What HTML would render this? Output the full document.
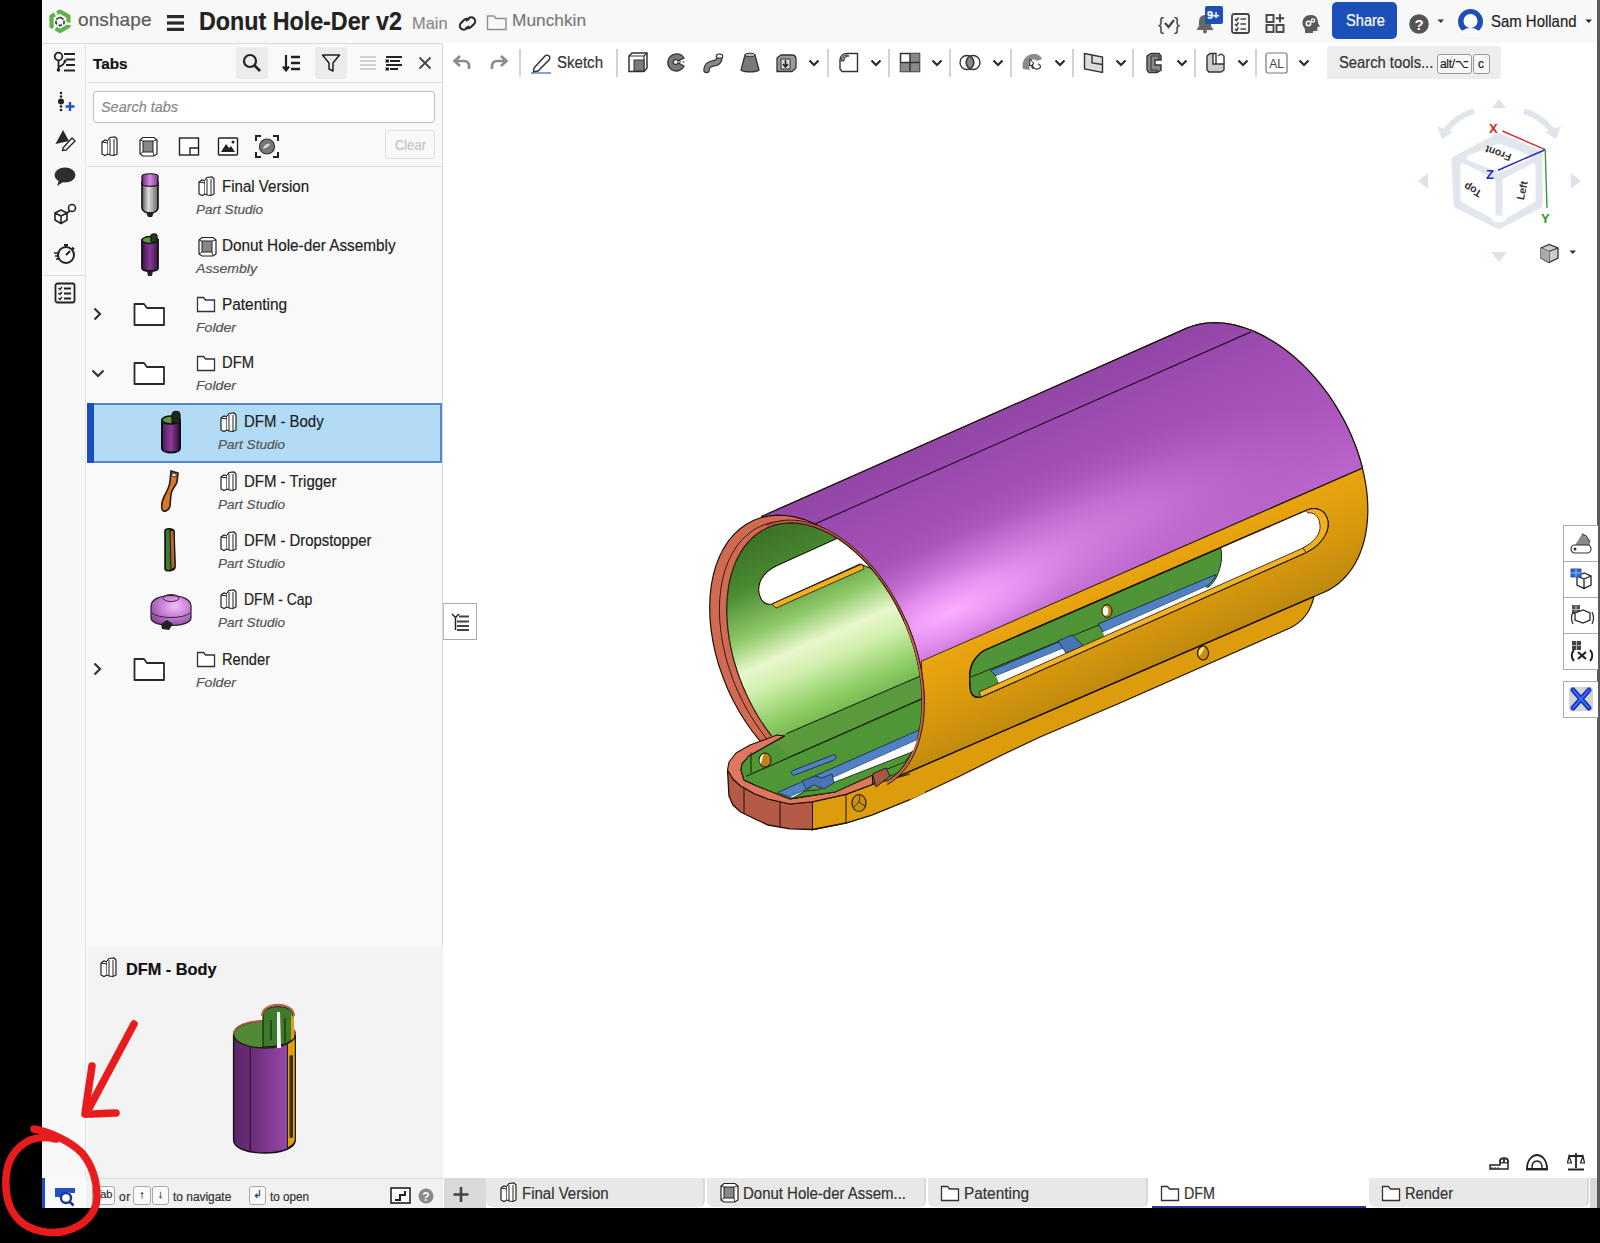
<!DOCTYPE html><html><head><meta charset="utf-8"><style>
*{margin:0;padding:0;box-sizing:border-box}
html,body{width:1600px;height:1243px;overflow:hidden;background:#000;font-family:"Liberation Sans",sans-serif;color:#222}
.a{position:absolute}
.t{position:absolute;white-space:nowrap;line-height:1;-webkit-text-stroke:0.2px currentColor}
svg{position:absolute;overflow:visible}
</style></head><body>
<div class="a" style="left:42px;top:0px;width:1555px;height:1208px;background:#fff;"></div>
<div class="a" style="left:1597px;top:0px;width:3px;height:1208px;background:#5a5a5a;"></div>
<div class="a" style="left:42px;top:0px;width:1555px;height:43px;background:#f8f8f8;"></div>
<div class="a" style="left:42px;top:43px;width:401px;height:1px;background:#dcdcdc;"></div>
<svg style="left:48px;top:9px" width="24" height="25" viewBox="0 0 24 25"><path d="M12,2.5 L20.5,7.3 L20.5,17.2 L12,22 L3.5,17.2 L3.5,7.3 Z" fill="none" stroke="#5cb346" stroke-width="4.2" stroke-linejoin="round" stroke-dasharray="16 2.5"/><path d="M12,8.2 L16,10.5 L16,14.5 L12,16.8 L8,14.5 L8,10.5 Z" fill="none" stroke="#3a3a3a" stroke-width="1.6" stroke-dasharray="4 1.5"/></svg>
<div class="t" style="left:78.0px;top:10.4px;font-size:19px;color:#5a5a5a;letter-spacing:0.1px;font-weight:normal;font-style:normal;">onshape</div>
<svg style="left:166px;top:14px" width="19" height="18" viewBox="0 0 19 18"><rect x="1" y="1" width="17" height="3.2" fill="#2a2a2a"/><rect x="1" y="7.4" width="17" height="3.2" fill="#2a2a2a"/><rect x="1" y="13.8" width="17" height="3.2" fill="#2a2a2a"/></svg>
<div class="t" style="left:198.5px;top:8.0px;font-size:26px;color:#222;letter-spacing:0px;font-weight:bold;font-style:normal;transform:scaleX(0.8951);transform-origin:0 0;">Donut Hole-Der v2</div>
<div class="t" style="left:411.5px;top:14.6px;font-size:17px;color:#8a8a8a;letter-spacing:0px;font-weight:normal;font-style:normal;transform:scaleX(0.9635);transform-origin:0 0;">Main</div>
<svg style="left:459px;top:15px" width="17" height="17" viewBox="0 0 17 17"><g fill="none" stroke="#2a2a2a" stroke-width="2.1" stroke-linecap="round"><path d="M7.5,5.5 L9.5,3.5 C11,2 13.5,2 15,3.5 C16.5,5 16.5,7.5 15,9 L12,12 C10.5,13.5 8.5,13.5 7.5,12.5"/><path d="M9.5,11.5 L7.5,13.5 C6,15 3.5,15 2,13.5 C0.5,12 0.5,9.5 2,8 L5,5 C6.5,3.5 8.5,3.5 9.5,4.5"/></g></svg>
<svg style="left:486px;top:14px" width="22" height="17" viewBox="0 0 22 17"><path d="M1.5,2 L8,2 L10,4.5 L20,4.5 L20,15.5 L1.5,15.5 Z" fill="none" stroke="#8f8f8f" stroke-width="1.4"/></svg>
<div class="t" style="left:512.0px;top:12.4px;font-size:17px;color:#7a7a7a;letter-spacing:0px;font-weight:normal;font-style:normal;transform:scaleX(1.0172);transform-origin:0 0;">Munchkin</div>
<svg style="left:1158px;top:14px" width="24" height="19" viewBox="0 0 24 19"><text x="0" y="16" font-family="Liberation Sans" font-size="18" fill="#444">{</text><text x="16" y="16" font-family="Liberation Sans" font-size="18" fill="#444">}</text><path d="M7,9 L10.5,13 L16,6" fill="none" stroke="#444" stroke-width="2.2"/></svg>
<svg style="left:1195px;top:13px" width="20" height="20" viewBox="0 0 20 20"><path d="M10,2 C5,2 4,6 4,10 L4,13 L1.5,17 L18.5,17 L16,13 L16,10 C16,6 15,2 10,2 Z" fill="#666"/><circle cx="10" cy="18.5" r="2" fill="#666"/></svg>
<div class="a" style="left:1205px;top:6px;width:18px;height:18px;background:#1d50b6;border-radius:2px"></div>
<div class="t" style="left:1207.0px;top:10.2px;font-size:11px;color:#fff;letter-spacing:-0.3px;font-weight:bold;font-style:normal;">9+</div>
<svg style="left:1231px;top:13px" width="19" height="21" viewBox="0 0 19 21"><rect x="1" y="1" width="17" height="19" rx="2" fill="none" stroke="#444" stroke-width="1.8"/><g stroke="#444" stroke-width="1.6"><path d="M4,6 L5.5,7.5 L7.5,4.5 M4,11 L5.5,12.5 L7.5,9.5 M4,16 L5.5,17.5 L7.5,14.5" fill="none"/><path d="M9.5,6 L15,6 M9.5,11 L15,11 M9.5,16 L15,16"/></g></svg>
<svg style="left:1265px;top:13px" width="22" height="21" viewBox="0 0 22 21"><g fill="none" stroke="#444" stroke-width="1.9"><rect x="1.5" y="2" width="7" height="7"/><rect x="1.5" y="12" width="7" height="7"/><rect x="11.5" y="12" width="7" height="7"/><path d="M15,1 L15,9.5 M10.8,5.2 L19.2,5.2"/></g></svg>
<svg style="left:1301px;top:14px" width="21" height="20" viewBox="0 0 21 20"><path d="M10,1 C4.5,1 1.5,4.5 1.5,9 C1.5,12 3,13.5 4,15 L4,19 L12,19 L12,17 L15,17 C16,17 16.5,16 16.5,15 L16.5,13 L19,12.5 L17,9 C17,4.5 15,1 10,1 Z" fill="#5a5a5a"/><circle cx="7.5" cy="9.5" r="2.2" fill="none" stroke="#fff" stroke-width="1.5"/><circle cx="12" cy="6.5" r="1.6" fill="none" stroke="#fff" stroke-width="1.3"/></svg>
<div class="a" style="left:1332px;top:2px;width:65px;height:37px;background:#1c4fb8;border-radius:5px"></div>
<div class="t" style="left:1345.5px;top:11.6px;font-size:17px;color:#fff;letter-spacing:0px;font-weight:normal;font-style:normal;transform:scaleX(0.8598);transform-origin:0 0;">Share</div>
<svg style="left:1409px;top:14px" width="21" height="20" viewBox="0 0 21 20"><circle cx="10" cy="10" r="9.8" fill="#555"/><text x="10" y="16" font-family="Liberation Sans" font-weight="bold" font-size="15" fill="#fff" text-anchor="middle">?</text></svg>
<svg style="left:1437px;top:19px" width="8" height="5" viewBox="0 0 8 5"><path d="M0.5,0.5 L7,0.5 L3.75,4 Z" fill="#333"/></svg>
<svg style="left:1457px;top:9px" width="27" height="25" viewBox="0 0 27 25"><defs><clipPath id="avc"><rect x="0" y="0" width="27" height="24"/></clipPath></defs><g clip-path="url(#avc)"><circle cx="13.5" cy="12.5" r="12.5" fill="#1d50b6"/><circle cx="13.5" cy="12" r="7" fill="#fff"/><ellipse cx="13.5" cy="27" rx="10.5" ry="8" fill="#fff"/></g></svg>
<div class="t" style="left:1490.5px;top:12.6px;font-size:17px;color:#222;letter-spacing:0px;font-weight:normal;font-style:normal;transform:scaleX(0.8785);transform-origin:0 0;">Sam Holland</div>
<svg style="left:1585px;top:19px" width="8" height="5" viewBox="0 0 8 5"><path d="M0.5,0.5 L7,0.5 L3.75,4 Z" fill="#222"/></svg>
<svg style="left:453px;top:54px" width="18" height="17" viewBox="0 0 18 17"><path d="M7,2 L1.5,7 L7,12 M2,7 L11,7 C14.5,7 16,9.5 16,12.5 L16,15" fill="none" stroke="#8a8a8a" stroke-width="2.6"/></svg>
<svg style="left:490px;top:54px" width="18" height="17" viewBox="0 0 18 17"><path d="M11,2 L16.5,7 L11,12 M16,7 L7,7 C3.5,7 2,9.5 2,12.5 L2,15" fill="none" stroke="#8a8a8a" stroke-width="2.6"/></svg>
<div class="a" style="left:519px;top:49px;width:2px;height:28px;background:#d4d4d4;"></div>
<svg style="left:530px;top:52px" width="22" height="22" viewBox="0 0 22 22"><path d="M4,16 L15,4 C16,3 18,3 19,4 C20,5 20,7 19,8 L8,19 L3.5,20 Z" fill="none" stroke="#333" stroke-width="1.5"/><path d="M1,21 L21,21" stroke="#4a6fc8" stroke-width="1.3"/></svg>
<div class="t" style="left:557.0px;top:54.5px;font-size:16px;color:#333;letter-spacing:0px;font-weight:normal;font-style:normal;transform:scaleX(0.9405);transform-origin:0 0;">Sketch</div>
<div class="a" style="left:616px;top:49px;width:2px;height:28px;background:#d4d4d4;"></div>
<svg style="left:627px;top:52px" width="22" height="21" viewBox="0 0 22 21"><path d="M2,4 L5,1 L20,1 L20,16 L17,19.5 L2,19.5 Z" fill="#fff" stroke="#333" stroke-width="1.5"/><path d="M2,4 L17,4 L20,1 M17,4 L17,19.5" fill="none" stroke="#333" stroke-width="1.2"/><rect x="7" y="8" width="10" height="11" fill="#7a7a7a" stroke="#333" stroke-width="1"/></svg>
<svg style="left:665px;top:52px" width="22" height="21" viewBox="0 0 22 21"><path d="M11,2 A8.5,8.5 0 1 0 19,14 L13,11 A2.5,2.5 0 1 1 13,9 L19,6 A8.5,8.5 0 0 0 11,2 Z" fill="#7a7a7a" stroke="#333" stroke-width="1.3"/><path d="M14,10 L21,10" stroke="#333" stroke-width="1" stroke-dasharray="2 1.5"/></svg>
<svg style="left:702px;top:52px" width="23" height="22" viewBox="0 0 23 22"><path d="M4.5,18 C4.5,13 8,12 11,11.5 C15,11 17.5,9 17.5,5" fill="none" stroke="#333" stroke-width="6.6" stroke-linecap="round"/><path d="M4.5,18 C4.5,13 8,12 11,11.5 C15,11 17.5,9 17.5,5" fill="none" stroke="#8a8a8a" stroke-width="4.2" stroke-linecap="round"/><ellipse cx="17.5" cy="4.2" rx="3.3" ry="2.2" fill="#eee" stroke="#333" stroke-width="1.1"/></svg>
<svg style="left:739px;top:52px" width="22" height="21" viewBox="0 0 22 21"><path d="M6,3 L16,3 L20,18 C17,20.5 5,20.5 2,18 Z" fill="#7a7a7a" stroke="#333" stroke-width="1.3"/><ellipse cx="11" cy="3" rx="5" ry="1.8" fill="#bbb" stroke="#333" stroke-width="1"/></svg>
<svg style="left:775px;top:52px" width="23" height="21" viewBox="0 0 23 21"><path d="M2,6 L6,3 L17,3 C20,3 21,5 21,7 L21,16 L17,19.5 L2,19.5 Z" fill="#9a9a9a" stroke="#333" stroke-width="1.3"/><rect x="6" y="7" width="9" height="10" fill="#ddd" stroke="#333" stroke-width="1"/><path d="M10.5,8 L10.5,14 M8,12 L10.5,15 L13,12" fill="none" stroke="#222" stroke-width="1.6"/></svg>
<svg style="left:808px;top:59px" width="12" height="8" viewBox="0 0 12 8"><path d="M1.5,1.5 L6,6 L10.5,1.5" fill="none" stroke="#2a2a2a" stroke-width="2.2"/></svg>
<div class="a" style="left:827px;top:49px;width:2px;height:28px;background:#d4d4d4;"></div>
<svg style="left:838px;top:52px" width="22" height="21" viewBox="0 0 22 21"><path d="M2,8 C2,4 5,1.5 9,1.5 L19.5,1.5 L19.5,19.5 L4,19.5 L2,17 Z" fill="#fff" stroke="#333" stroke-width="1.4"/><path d="M3,9 C3,5 6,3 9,3 L11,4 C8,4.5 6,6 6,9 Z" fill="#8a8a8a" stroke="#333" stroke-width="0.9"/></svg>
<svg style="left:870px;top:59px" width="12" height="8" viewBox="0 0 12 8"><path d="M1.5,1.5 L6,6 L10.5,1.5" fill="none" stroke="#2a2a2a" stroke-width="2.2"/></svg>
<div class="a" style="left:888px;top:49px;width:2px;height:28px;background:#d4d4d4;"></div>
<svg style="left:899px;top:52px" width="22" height="21" viewBox="0 0 22 21"><rect x="1.5" y="1.5" width="19" height="18" fill="#fff" stroke="#333" stroke-width="1.5"/><rect x="11" y="1.5" width="9.5" height="9" fill="#8a8a8a"/><rect x="1.5" y="10.5" width="9.5" height="9" fill="#8a8a8a"/><rect x="11" y="10.5" width="9.5" height="9" fill="#8a8a8a"/><path d="M11,1.5 L11,19.5 M1.5,10.5 L20.5,10.5" stroke="#333" stroke-width="1.5"/></svg>
<svg style="left:931px;top:59px" width="12" height="8" viewBox="0 0 12 8"><path d="M1.5,1.5 L6,6 L10.5,1.5" fill="none" stroke="#2a2a2a" stroke-width="2.2"/></svg>
<div class="a" style="left:948.5px;top:49px;width:2px;height:28px;background:#d4d4d4;"></div>
<svg style="left:959px;top:52px" width="23" height="21" viewBox="0 0 23 21"><circle cx="8" cy="10.5" r="7" fill="#fff" stroke="#333" stroke-width="1.4"/><circle cx="14" cy="10.5" r="7" fill="none" stroke="#333" stroke-width="1.4"/><path d="M11,4.5 A7,7 0 0 1 11,16.5 A7,7 0 0 1 11,4.5 Z" fill="#8a8a8a" stroke="#333" stroke-width="1"/></svg>
<svg style="left:992px;top:59px" width="12" height="8" viewBox="0 0 12 8"><path d="M1.5,1.5 L6,6 L10.5,1.5" fill="none" stroke="#2a2a2a" stroke-width="2.2"/></svg>
<div class="a" style="left:1010px;top:49px;width:2px;height:28px;background:#d4d4d4;"></div>
<svg style="left:1020px;top:51px" width="24" height="23" viewBox="0 0 24 23"><path d="M3,18 C1,10 6,3 14,3 C18,3 21,5 22,8 L17,10 C15,8 12,8 10,10 C8,12 9,16 10,19 Z" fill="#8a8a8a"/><path d="M10,8 L14,13 L12,13.5 L14,17 L12.5,17.5 L11,14 L9.5,15 Z" fill="#fff" stroke="#222" stroke-width="1"/><path d="M12,15 C14,18 17,19 20,17 C21,15 20,13 18,13" fill="none" stroke="#333" stroke-width="1.2"/></svg>
<svg style="left:1054px;top:59px" width="12" height="8" viewBox="0 0 12 8"><path d="M1.5,1.5 L6,6 L10.5,1.5" fill="none" stroke="#2a2a2a" stroke-width="2.2"/></svg>
<div class="a" style="left:1071.5px;top:49px;width:2px;height:28px;background:#d4d4d4;"></div>
<svg style="left:1083px;top:52px" width="21" height="22" viewBox="0 0 21 22"><path d="M1.5,1.5 L19.5,5 L19.5,20.5 L1.5,17 Z" fill="#ddd" stroke="#333" stroke-width="1.4"/><path d="M9,3 L9,11 L19.5,12.5" fill="none" stroke="#333" stroke-width="1.4"/></svg>
<svg style="left:1115px;top:59px" width="12" height="8" viewBox="0 0 12 8"><path d="M1.5,1.5 L6,6 L10.5,1.5" fill="none" stroke="#2a2a2a" stroke-width="2.2"/></svg>
<div class="a" style="left:1132px;top:49px;width:2px;height:28px;background:#d4d4d4;"></div>
<svg style="left:1145px;top:52px" width="18" height="22" viewBox="0 0 18 22"><path d="M2,4 L6,1.5 L14,1.5 L16,4 L16,8 L10,8 L10,13 L16,13 L16,18 L12,20.5 L4,20.5 L2,18 Z" fill="#8a8a8a" stroke="#333" stroke-width="1.4"/><path d="M6,4 L14,4 L14,8 M6,4 L6,18 L12,18 L12,20" fill="none" stroke="#333" stroke-width="1.1"/></svg>
<svg style="left:1176px;top:59px" width="12" height="8" viewBox="0 0 12 8"><path d="M1.5,1.5 L6,6 L10.5,1.5" fill="none" stroke="#2a2a2a" stroke-width="2.2"/></svg>
<div class="a" style="left:1193.5px;top:49px;width:2px;height:28px;background:#d4d4d4;"></div>
<svg style="left:1205px;top:52px" width="21" height="21" viewBox="0 0 21 21"><path d="M2,4 L5,1.5 L8,1.5 L8,12 L19,12 L19,18 L16,20 L4,20 L2,18 Z" fill="#ccc" stroke="#333" stroke-width="1.4"/><path d="M8,1.5 L11,1.5 L11,12 M13,4 L16,2 L19,4 L19,12" fill="none" stroke="#333" stroke-width="1.4"/></svg>
<svg style="left:1237px;top:59px" width="12" height="8" viewBox="0 0 12 8"><path d="M1.5,1.5 L6,6 L10.5,1.5" fill="none" stroke="#2a2a2a" stroke-width="2.2"/></svg>
<div class="a" style="left:1255px;top:49px;width:2px;height:28px;background:#d4d4d4;"></div>
<svg style="left:1265px;top:52px" width="23" height="22" viewBox="0 0 23 22"><rect x="1" y="1" width="21" height="20" rx="2" fill="#fff" stroke="#777" stroke-width="1.2"/><text x="11.5" y="15.5" font-family="Liberation Sans" font-size="12" fill="#444" text-anchor="middle">AL</text></svg>
<svg style="left:1298px;top:59px" width="12" height="8" viewBox="0 0 12 8"><path d="M1.5,1.5 L6,6 L10.5,1.5" fill="none" stroke="#2a2a2a" stroke-width="2.2"/></svg>
<div class="a" style="left:1327px;top:46px;width:174px;height:33px;background:#ededed;border-radius:3px"></div>
<div class="t" style="left:1339.0px;top:55.0px;font-size:16px;color:#333;letter-spacing:0px;font-weight:normal;font-style:normal;transform:scaleX(0.9221);transform-origin:0 0;">Search tools...</div>
<div class="a" style="left:1437px;top:54px;width:35px;height:20px;background:#f7f7f7;border:1px solid #999;border-radius:3px"></div>
<div class="t" style="left:1440.0px;top:57.8px;font-size:12px;color:#222;letter-spacing:-0.3px;font-weight:normal;font-style:normal;">alt/⌥</div>
<div class="a" style="left:1473px;top:54px;width:17px;height:20px;background:#f7f7f7;border:1px solid #999;border-radius:3px"></div>
<div class="t" style="left:1478.0px;top:57.8px;font-size:12px;color:#222;letter-spacing:0px;font-weight:normal;font-style:normal;">c</div>
<div class="a" style="left:42px;top:44px;width:44px;height:1134px;background:#f8f8f8;border-right:1px solid #e2e2e2"></div>
<div class="a" style="left:44px;top:275px;width:42px;height:1px;background:#dedede;"></div>
<svg style="left:53px;top:51px" width="24" height="24" viewBox="0 0 24 24"><circle cx="5.5" cy="5.5" r="3.8" fill="none" stroke="#222" stroke-width="1.8"/><path d="M5.5,9.3 L5.5,19 M5.5,16 C9,15 11,13 12,10" fill="none" stroke="#222" stroke-width="1.8"/><circle cx="5.5" cy="19" r="1.8" fill="#222"/><circle cx="12" cy="10" r="1.5" fill="#222"/><path d="M11,3 L22,3 M13,8.5 L22,8.5 M13,14 L22,14 M11,19.5 L22,19.5" stroke="#222" stroke-width="1.8"/></svg>
<svg style="left:55px;top:91px" width="22" height="22" viewBox="0 0 22 22"><g fill="#222"><circle cx="6" cy="2" r="1.3"/><circle cx="6" cy="5.5" r="1.3"/><circle cx="6" cy="10.5" r="3"/><circle cx="6" cy="15.5" r="1.3"/><circle cx="6" cy="19" r="1.3"/></g><path d="M15,11 L15,20 M10.5,15.5 L19.5,15.5" stroke="#1f4fc8" stroke-width="2.4"/></svg>
<svg style="left:54px;top:128px" width="23" height="23" viewBox="0 0 23 23"><path d="M1.5,16 L9,2 L15,13 Z" fill="#2a2a2a"/><path d="M9,20 L18,10 L21,13 L12,22 L8.5,22.5 Z" fill="#fff" stroke="#2a2a2a" stroke-width="1.4"/></svg>
<svg style="left:53px;top:166px" width="24" height="22" viewBox="0 0 24 22"><ellipse cx="12" cy="9" rx="10.5" ry="7.5" fill="#2e2e2e"/><path d="M6,14 L4,20 L11,15.5 Z" fill="#2e2e2e"/></svg>
<svg style="left:53px;top:203px" width="24" height="24" viewBox="0 0 24 24"><path d="M2,10 L8,7 L14,10 L14,17 L8,20.5 L2,17 Z M2,10 L8,13 L14,10 M8,13 L8,20.5" fill="#fff" stroke="#222" stroke-width="1.6" stroke-linejoin="round"/><path d="M14,10 L18,7" stroke="#222" stroke-width="1.6"/><circle cx="19" cy="5" r="3.5" fill="#fff" stroke="#222" stroke-width="1.6"/></svg>
<svg style="left:53px;top:242px" width="24" height="24" viewBox="0 0 24 24"><circle cx="13" cy="13" r="8" fill="none" stroke="#222" stroke-width="2"/><path d="M11,3 L15,3 M13,3 L13,5 M19,5.5 L21,7.5 M13,13 L17,9" stroke="#222" stroke-width="2"/><path d="M1,11 L5,11 M2,14 L5,14 M3,17 L6,17" stroke="#222" stroke-width="1.3"/></svg>
<svg style="left:54px;top:282px" width="22" height="22" viewBox="0 0 22 22"><rect x="1.5" y="1.5" width="19" height="19" rx="2" fill="none" stroke="#222" stroke-width="1.8"/><path d="M4.5,6 L6,7.5 L8,5 M4.5,11 L6,12.5 L8,10 M4.5,16 L6,17.5 L8,15" fill="none" stroke="#222" stroke-width="1.4"/><path d="M10,6.5 L17,6.5 M10,11.5 L17,11.5 M10,16.5 L17,16.5" stroke="#222" stroke-width="1.8"/></svg>
<div class="a" style="left:87px;top:44px;width:356px;height:1134px;background:#f9f9f9;border-right:1px solid #d9d9d9"></div>
<div class="t" style="left:93.0px;top:55.9px;font-size:15px;color:#111;letter-spacing:0px;font-weight:bold;font-style:normal;transform:scaleX(1.0209);transform-origin:0 0;">Tabs</div>
<div class="a" style="left:236px;top:47px;width:32px;height:32px;background:#ebebeb;border-radius:3px"></div>
<svg style="left:242px;top:53px" width="20" height="20" viewBox="0 0 20 20"><circle cx="8" cy="8" r="6" fill="none" stroke="#222" stroke-width="2.2"/><path d="M12.5,12.5 L18,18" stroke="#222" stroke-width="2.6"/></svg>
<svg style="left:282px;top:54px" width="19" height="18" viewBox="0 0 19 18"><path d="M4,1 L4,16 M1,12.5 L4,16.5 L7,12.5" fill="none" stroke="#222" stroke-width="2.2"/><path d="M9,3 L18,3 M9,9 L18,9 M9,15 L18,15" stroke="#222" stroke-width="2.4"/></svg>
<div class="a" style="left:315px;top:47px;width:32px;height:32px;background:#ebebeb;border-radius:3px"></div>
<svg style="left:321px;top:53px" width="20" height="20" viewBox="0 0 20 20"><path d="M1.5,2 L18.5,2 L12,10 L12,18 L8,16 L8,10 Z" fill="none" stroke="#222" stroke-width="1.5" stroke-linejoin="round"/></svg>
<svg style="left:359px;top:55px" width="18" height="16" viewBox="0 0 18 16"><path d="M1,2 L17,2 M1,6 L17,6 M1,10 L17,10 M1,14 L17,14" stroke="#d0d0d0" stroke-width="2"/></svg>
<svg style="left:385px;top:55px" width="18" height="16" viewBox="0 0 18 16"><path d="M1,2 L17,2 M5,6 L15,6 M1,10 L17,10 M5,14 L13,14" stroke="#222" stroke-width="2"/><rect x="0.5" y="4.5" width="3.5" height="3" fill="#222"/><rect x="0.5" y="12.5" width="3.5" height="3" fill="#222"/></svg>
<svg style="left:418px;top:56px" width="14" height="14" viewBox="0 0 14 14"><path d="M1.5,1.5 L12.5,12.5 M12.5,1.5 L1.5,12.5" stroke="#444" stroke-width="1.8"/></svg>
<div class="a" style="left:87px;top:82px;width:356px;height:1px;background:#dedede;"></div>
<div class="a" style="left:93px;top:91px;width:342px;height:32px;background:#fff;border:1px solid #bdbdbd;border-radius:3px"></div>
<div class="t" style="left:101.0px;top:99.3px;font-size:15px;color:#888;letter-spacing:0px;font-weight:normal;font-style:italic;transform:scaleX(0.9620);transform-origin:0 0;">Search tabs</div>
<svg style="left:100px;top:136px" width="20" height="21" viewBox="0 0 20 21"><path d="M2,6 L5,4 L8,5 L8,18 L5,19.5 L2,18 Z" fill="#fff" stroke="#222" stroke-width="1.2"/><path d="M8,4 L10,1.5 L15,1 L17,3 L17,18 L14,19.5 L10,19 L8,18" fill="#fff" stroke="#222" stroke-width="1.2"/><path d="M10,3 L10,19 M14,3 L14,19.5 M2,6 L8,7" fill="none" stroke="#222" stroke-width="1"/></svg>
<svg style="left:138px;top:136px" width="21" height="21" viewBox="0 0 21 21"><path d="M2,4 L5,1.5 L16,1.5 L19,4 L19,18 L16,20 L5,20 L2,18 Z" fill="#fff" stroke="#222" stroke-width="1.2"/><path d="M5,5 L15,5 L15,16 L5,16 Z" fill="#888" stroke="#222" stroke-width="1"/><path d="M2,4 L5,5 M15,5 L19,4 M5,16 L2,18 M15,16 L16,20" stroke="#222" stroke-width="0.9"/></svg>
<svg style="left:178px;top:136px" width="22" height="21" viewBox="0 0 22 21"><rect x="1.5" y="2" width="19" height="17" fill="#fff" stroke="#222" stroke-width="1.4"/><path d="M12,19 L12,12 L20.5,12" fill="none" stroke="#222" stroke-width="1.4"/></svg>
<svg style="left:217px;top:136px" width="22" height="21" viewBox="0 0 22 21"><rect x="1.5" y="2" width="19" height="17" rx="1" fill="#fff" stroke="#222" stroke-width="1.4"/><path d="M4,16 L9,8 L12,12 L14,10 L18,16 Z" fill="#222"/><circle cx="16" cy="6" r="1.5" fill="#222"/></svg>
<svg style="left:255px;top:135px" width="24" height="23" viewBox="0 0 24 23"><path d="M1,6 L1,1 L6,1 M18,1 L23,1 L23,6 M23,17 L23,22 L18,22 M6,22 L1,22 L1,17" fill="none" stroke="#222" stroke-width="2"/><circle cx="12" cy="11.5" r="7.5" fill="#777" stroke="#333" stroke-width="1.2"/><path d="M8,14 C9,10 12,8 15,9 C14,11 12,13 8,14 Z" fill="#ddd"/></svg>
<div class="a" style="left:385px;top:130px;width:50px;height:29px;background:#f9f9f9;border:1px solid #e0e0e0;border-radius:3px"></div>
<div class="t" style="left:395.0px;top:138.1px;font-size:14px;color:#c4c4c4;letter-spacing:0px;font-weight:normal;font-style:normal;transform:scaleX(0.9267);transform-origin:0 0;">Clear</div>
<div class="a" style="left:87px;top:166px;width:356px;height:1px;background:#e2e2e2;"></div>
<div class="a" style="left:87px;top:403px;width:355px;height:60px;background:#b2dcf5;border:2px solid #5a86c8;border-left:none"></div>
<div class="a" style="left:87px;top:403px;width:7px;height:60px;background:#1b4fc0;"></div>
<svg style="left:197px;top:176px" width="20" height="21" viewBox="0 0 20 21"><path d="M2,6 L5,4 L8,5 L8,18 L5,19.5 L2,18 Z" fill="#fff" stroke="#222" stroke-width="1.2"/><path d="M8,4 L10,1.5 L15,1 L17,3 L17,18 L14,19.5 L10,19 L8,18" fill="#fff" stroke="#222" stroke-width="1.2"/><path d="M10,3 L10,19 M14,3 L14,19.5 M2,6 L8,7" fill="none" stroke="#222" stroke-width="1"/></svg>
<div class="t" style="left:222.0px;top:178.5px;font-size:16px;color:#222;letter-spacing:0px;font-weight:normal;font-style:normal;transform:scaleX(0.9407);transform-origin:0 0;">Final Version</div>
<div class="t" style="left:196.0px;top:202.5px;font-size:13px;color:#555;letter-spacing:0px;font-weight:normal;font-style:italic;transform:scaleX(1.0418);transform-origin:0 0;">Part Studio</div>
<svg style="left:197px;top:235.5px" width="21" height="21" viewBox="0 0 21 21"><path d="M2,4 L5,1.5 L16,1.5 L19,4 L19,18 L16,20 L5,20 L2,18 Z" fill="#fff" stroke="#222" stroke-width="1.2"/><path d="M5,5 L15,5 L15,16 L5,16 Z" fill="#888" stroke="#222" stroke-width="1"/><path d="M2,4 L5,5 M15,5 L19,4 M5,16 L2,18 M15,16 L16,20" stroke="#222" stroke-width="0.9"/></svg>
<div class="t" style="left:222.0px;top:238.0px;font-size:16px;color:#222;letter-spacing:0px;font-weight:normal;font-style:normal;transform:scaleX(0.9570);transform-origin:0 0;">Donut Hole-der Assembly</div>
<div class="t" style="left:196.0px;top:262.0px;font-size:13px;color:#555;letter-spacing:0px;font-weight:normal;font-style:italic;transform:scaleX(1.0826);transform-origin:0 0;">Assembly</div>
<svg style="left:196px;top:295px" width="21" height="19" viewBox="0 0 21 19"><path d="M1.5,2.5 L7.5,2.5 L9.5,5 L18.5,5 L18.5,16.5 L1.5,16.5 Z" fill="#fff" stroke="#333" stroke-width="1.3"/></svg>
<div class="t" style="left:222.0px;top:296.5px;font-size:16px;color:#222;letter-spacing:0px;font-weight:normal;font-style:normal;transform:scaleX(0.9615);transform-origin:0 0;">Patenting</div>
<div class="t" style="left:196.0px;top:320.5px;font-size:13px;color:#555;letter-spacing:0px;font-weight:normal;font-style:italic;transform:scaleX(1.0856);transform-origin:0 0;">Folder</div>
<svg style="left:196px;top:353.5px" width="21" height="19" viewBox="0 0 21 19"><path d="M1.5,2.5 L7.5,2.5 L9.5,5 L18.5,5 L18.5,16.5 L1.5,16.5 Z" fill="#fff" stroke="#333" stroke-width="1.3"/></svg>
<div class="t" style="left:222.0px;top:355.0px;font-size:16px;color:#222;letter-spacing:0px;font-weight:normal;font-style:normal;transform:scaleX(0.9234);transform-origin:0 0;">DFM</div>
<div class="t" style="left:196.0px;top:379.0px;font-size:13px;color:#555;letter-spacing:0px;font-weight:normal;font-style:italic;transform:scaleX(1.0856);transform-origin:0 0;">Folder</div>
<svg style="left:219px;top:411.5px" width="20" height="21" viewBox="0 0 20 21"><path d="M2,6 L5,4 L8,5 L8,18 L5,19.5 L2,18 Z" fill="#fff" stroke="#222" stroke-width="1.2"/><path d="M8,4 L10,1.5 L15,1 L17,3 L17,18 L14,19.5 L10,19 L8,18" fill="#fff" stroke="#222" stroke-width="1.2"/><path d="M10,3 L10,19 M14,3 L14,19.5 M2,6 L8,7" fill="none" stroke="#222" stroke-width="1"/></svg>
<div class="t" style="left:244.0px;top:414.0px;font-size:16px;color:#222;letter-spacing:0px;font-weight:normal;font-style:normal;transform:scaleX(0.9327);transform-origin:0 0;">DFM - Body</div>
<div class="t" style="left:218.0px;top:438.0px;font-size:13px;color:#555;letter-spacing:0px;font-weight:normal;font-style:italic;transform:scaleX(1.0418);transform-origin:0 0;">Part Studio</div>
<svg style="left:219px;top:471px" width="20" height="21" viewBox="0 0 20 21"><path d="M2,6 L5,4 L8,5 L8,18 L5,19.5 L2,18 Z" fill="#fff" stroke="#222" stroke-width="1.2"/><path d="M8,4 L10,1.5 L15,1 L17,3 L17,18 L14,19.5 L10,19 L8,18" fill="#fff" stroke="#222" stroke-width="1.2"/><path d="M10,3 L10,19 M14,3 L14,19.5 M2,6 L8,7" fill="none" stroke="#222" stroke-width="1"/></svg>
<div class="t" style="left:244.0px;top:473.5px;font-size:16px;color:#222;letter-spacing:0px;font-weight:normal;font-style:normal;transform:scaleX(0.9365);transform-origin:0 0;">DFM - Trigger</div>
<div class="t" style="left:218.0px;top:497.5px;font-size:13px;color:#555;letter-spacing:0px;font-weight:normal;font-style:italic;transform:scaleX(1.0418);transform-origin:0 0;">Part Studio</div>
<svg style="left:219px;top:530.5px" width="20" height="21" viewBox="0 0 20 21"><path d="M2,6 L5,4 L8,5 L8,18 L5,19.5 L2,18 Z" fill="#fff" stroke="#222" stroke-width="1.2"/><path d="M8,4 L10,1.5 L15,1 L17,3 L17,18 L14,19.5 L10,19 L8,18" fill="#fff" stroke="#222" stroke-width="1.2"/><path d="M10,3 L10,19 M14,3 L14,19.5 M2,6 L8,7" fill="none" stroke="#222" stroke-width="1"/></svg>
<div class="t" style="left:244.0px;top:533.0px;font-size:16px;color:#222;letter-spacing:0px;font-weight:normal;font-style:normal;transform:scaleX(0.9305);transform-origin:0 0;">DFM - Dropstopper</div>
<div class="t" style="left:218.0px;top:557.0px;font-size:13px;color:#555;letter-spacing:0px;font-weight:normal;font-style:italic;transform:scaleX(1.0418);transform-origin:0 0;">Part Studio</div>
<svg style="left:219px;top:589px" width="20" height="21" viewBox="0 0 20 21"><path d="M2,6 L5,4 L8,5 L8,18 L5,19.5 L2,18 Z" fill="#fff" stroke="#222" stroke-width="1.2"/><path d="M8,4 L10,1.5 L15,1 L17,3 L17,18 L14,19.5 L10,19 L8,18" fill="#fff" stroke="#222" stroke-width="1.2"/><path d="M10,3 L10,19 M14,3 L14,19.5 M2,6 L8,7" fill="none" stroke="#222" stroke-width="1"/></svg>
<div class="t" style="left:244.0px;top:591.5px;font-size:16px;color:#222;letter-spacing:0px;font-weight:normal;font-style:normal;transform:scaleX(0.8744);transform-origin:0 0;">DFM - Cap</div>
<div class="t" style="left:218.0px;top:615.5px;font-size:13px;color:#555;letter-spacing:0px;font-weight:normal;font-style:italic;transform:scaleX(1.0418);transform-origin:0 0;">Part Studio</div>
<svg style="left:196px;top:650px" width="21" height="19" viewBox="0 0 21 19"><path d="M1.5,2.5 L7.5,2.5 L9.5,5 L18.5,5 L18.5,16.5 L1.5,16.5 Z" fill="#fff" stroke="#333" stroke-width="1.3"/></svg>
<div class="t" style="left:222.0px;top:651.5px;font-size:16px;color:#222;letter-spacing:0px;font-weight:normal;font-style:normal;transform:scaleX(0.9148);transform-origin:0 0;">Render</div>
<div class="t" style="left:196.0px;top:675.5px;font-size:13px;color:#555;letter-spacing:0px;font-weight:normal;font-style:italic;transform:scaleX(1.0856);transform-origin:0 0;">Folder</div>
<svg style="left:93px;top:307px" width="9" height="14" viewBox="0 0 9 14"><path d="M1.5,1.5 L7,7 L1.5,12.5" fill="none" stroke="#333" stroke-width="2.2"/></svg>
<svg style="left:133px;top:302px" width="33" height="25" viewBox="0 0 33 25"><path d="M1.5,2 L11,2 L14,6 L31,6 L31,23 L1.5,23 Z" fill="#fff" stroke="#2a2a2a" stroke-width="1.8" stroke-linejoin="round"/></svg>
<svg style="left:91px;top:368.5px" width="14" height="9" viewBox="0 0 14 9"><path d="M1.5,1.5 L7,7 L12.5,1.5" fill="none" stroke="#333" stroke-width="2.2"/></svg>
<svg style="left:133px;top:360.5px" width="33" height="25" viewBox="0 0 33 25"><path d="M1.5,2 L11,2 L14,6 L31,6 L31,23 L1.5,23 Z" fill="#fff" stroke="#2a2a2a" stroke-width="1.8" stroke-linejoin="round"/></svg>
<svg style="left:93px;top:662px" width="9" height="14" viewBox="0 0 9 14"><path d="M1.5,1.5 L7,7 L1.5,12.5" fill="none" stroke="#333" stroke-width="2.2"/></svg>
<svg style="left:133px;top:657px" width="33" height="25" viewBox="0 0 33 25"><path d="M1.5,2 L11,2 L14,6 L31,6 L31,23 L1.5,23 Z" fill="#fff" stroke="#2a2a2a" stroke-width="1.8" stroke-linejoin="round"/></svg>
<svg style="left:138px;top:172px" width="24" height="47" viewBox="0 0 24 47"><defs><linearGradient id="tg1" x1="0" x2="1"><stop offset="0" stop-color="#555"/><stop offset="0.4" stop-color="#ddd"/><stop offset="1" stop-color="#666"/></linearGradient><linearGradient id="tp1" x1="0" x2="1"><stop offset="0" stop-color="#6a2a7a"/><stop offset="0.5" stop-color="#d58ae0"/><stop offset="1" stop-color="#7a3a8a"/></linearGradient></defs><path d="M4,10 L4,36 C4,39 8,41 12,41 C16,41 20,39 20,36 L20,10 Z" fill="url(#tg1)" stroke="#111" stroke-width="1.6"/><path d="M4,4 C4,1 20,1 20,4 L20,12 C20,15 4,15 4,12 Z" fill="url(#tp1)" stroke="#111" stroke-width="1.2"/><path d="M8,40 L16,40 L14,45 L10,45 Z" fill="#222"/></svg>
<svg style="left:138px;top:232px" width="24" height="47" viewBox="0 0 24 47"><defs><linearGradient id="tp2" x1="0" x2="1"><stop offset="0" stop-color="#3a1544"/><stop offset="0.5" stop-color="#8a3a9a"/><stop offset="1" stop-color="#3a1544"/></linearGradient></defs><path d="M4,8 L4,36 C4,40 20,40 20,36 L20,8 Z" fill="url(#tp2)" stroke="#111" stroke-width="1.8"/><ellipse cx="12" cy="8" rx="8" ry="3.5" fill="#5a9a3a" stroke="#111" stroke-width="1.4"/><path d="M13,4 C13,1 19,1 19,4 L19,10 L13,10 Z" fill="#2a3a20" stroke="#111" stroke-width="1.2"/><path d="M9,39 L15,39 L14,44 L10,44 Z" fill="#222"/></svg>
<svg style="left:159px;top:409px" width="24" height="47" viewBox="0 0 24 47"><defs><linearGradient id="tp3" x1="0" x2="1"><stop offset="0" stop-color="#4a1a58"/><stop offset="0.5" stop-color="#8e3c9e"/><stop offset="1" stop-color="#2a0a30"/></linearGradient></defs><path d="M3,11 L3,39 C3,45 21,45 21,39 L21,11 Z" fill="url(#tp3)" stroke="#111" stroke-width="2"/><ellipse cx="12" cy="11" rx="9" ry="4" fill="#5a9a3a" stroke="#111" stroke-width="1.6"/><path d="M13,6 C13,1 21,1 21,6 L21,14 L13,14 Z" fill="#1a2a14" stroke="#111" stroke-width="1.2"/></svg>
<svg style="left:158px;top:468px" width="24" height="47" viewBox="0 0 24 47"><path d="M13,3 L20,5 L19,14 C18,18 14,20 13,26 L12,38 C11,43 5,45 4,41 C3,36 5,30 8,25 C10,21 12,17 12,13 Z" fill="#d8782a" stroke="#2a1a10" stroke-width="1.6"/><path d="M14,5 L18,6 L18,9 L14,8 Z" fill="#fff" stroke="#222" stroke-width="0.8"/></svg>
<svg style="left:160px;top:527px" width="22" height="47" viewBox="0 0 22 47"><path d="M5,4 C5,1 13,1 14,4 L15,40 C15,44 6,45 5,42 Z" fill="#3a7a2a" stroke="#111" stroke-width="1.6"/><path d="M10,3 L14,4 L15,40 L11,43 Z" fill="#b8682a" stroke="#111" stroke-width="1"/></svg>
<svg style="left:148px;top:586px" width="46" height="47" viewBox="0 0 46 47"><defs><radialGradient id="tc" cx="0.6" cy="0.35" r="0.7"><stop offset="0" stop-color="#f4c0f8"/><stop offset="0.5" stop-color="#c882d8"/><stop offset="1" stop-color="#8a4a9a"/></radialGradient></defs><path d="M3,20 C3,6 43,6 43,20 L43,32 C43,42 3,42 3,32 Z" fill="url(#tc)" stroke="#2a1a2a" stroke-width="1.2"/><ellipse cx="23" cy="12" rx="8" ry="3.5" fill="none" stroke="#3a2a3a" stroke-width="1"/><path d="M4,27 C10,33 36,33 42,27" fill="none" stroke="#3a2a3a" stroke-width="1"/><path d="M13,38 L19,34 L25,38 L21,44 L14,43 Z" fill="#222"/></svg>
<div class="a" style="left:87px;top:946px;width:356px;height:232px;background:#f3f3f3;"></div>
<svg style="left:99px;top:957px" width="20" height="21" viewBox="0 0 20 21"><path d="M2,6 L5,4 L8,5 L8,18 L5,19.5 L2,18 Z" fill="#fff" stroke="#222" stroke-width="1.2"/><path d="M8,4 L10,1.5 L15,1 L17,3 L17,18 L14,19.5 L10,19 L8,18" fill="#fff" stroke="#222" stroke-width="1.2"/><path d="M10,3 L10,19 M14,3 L14,19.5 M2,6 L8,7" fill="none" stroke="#222" stroke-width="1"/></svg>
<div class="t" style="left:125.5px;top:960.6px;font-size:17px;color:#111;letter-spacing:0px;font-weight:bold;font-style:normal;transform:scaleX(0.9595);transform-origin:0 0;">DFM - Body</div>
<svg style="left:225px;top:1000px" width="80" height="160" viewBox="0 0 80 160"><defs><linearGradient id="pv" x1="0" x2="1"><stop offset="0" stop-color="#5a2668"/><stop offset="0.3" stop-color="#6a2e7a"/><stop offset="0.75" stop-color="#8e42a0"/><stop offset="0.9" stop-color="#9a4aac"/><stop offset="1" stop-color="#7a3a8a"/></linearGradient></defs><path d="M8.6,34.5 L8.6,140 C8.6,148 22,153 39.5,153 C57,153 70.3,148 70.3,140 L70.3,34.5 Z" fill="url(#pv)" stroke="#111" stroke-width="1.4"/><path d="M62.4,42 L70.3,38 L70.3,140 C69,144 66,146 62.4,148 Z" fill="#e0a010" stroke="#111" stroke-width="1"/><rect x="64.5" y="55" width="3.5" height="83" rx="1.5" fill="#3a3010"/><path d="M25.2,46 L25.2,151" stroke="#2a0a30" stroke-width="1"/><ellipse cx="39.5" cy="34.5" rx="30.9" ry="13.5" fill="#4f8a36" stroke="#2a1a10" stroke-width="1.3"/><path d="M8.6,34.5 C8.6,26 22,21 39.5,21 C57,21 70.3,26 70.3,34.5" fill="none" stroke="#b05a44" stroke-width="1.6"/><path d="M38,24 L38,14 C38,4 68,4 68,14 L68,40 C60,45 48,47 38,47 Z" fill="#3d7a2a" stroke="#1a1a10" stroke-width="1.1"/><path d="M37,16 C37,1 69,1 69,16" fill="none" stroke="#b8604a" stroke-width="2"/><path d="M66,14 L69,18 L69,38 L66,40 Z" fill="#d8a020"/><path d="M52,12 L55,12 L56,48 L52,48 Z" fill="#fff"/><path d="M46,20 L46,40 M60,18 L60,42" stroke="#1a2a10" stroke-width="1.2"/></svg>
<div class="a" style="left:86px;top:1178px;width:357px;height:30px;background:#f1f1f1;border-top:1px solid #dcdcdc"></div>
<div class="a" style="left:42px;top:1178px;width:44px;height:30px;background:#f9f9f9;"></div>
<div class="a" style="left:42px;top:1178px;width:3px;height:30px;background:#1f4fbf;"></div>
<svg style="left:54px;top:1187px" width="22" height="19" viewBox="0 0 22 19"><path d="M1,1 L21,1 L21,6 L16,6 A6,6 0 0 0 7,10 L1,10 Z" fill="#2150c0"/><circle cx="12" cy="11" r="5" fill="none" stroke="#1a3a8a" stroke-width="2.4"/><path d="M15.5,14.5 L19.5,18.5" stroke="#1a3a8a" stroke-width="2.6"/></svg>
<div class="a" style="left:92px;top:1186px;width:23px;height:19px;background:#fafafa;border:1px solid #a8a8a8;border-radius:3px"></div>
<div class="t" style="left:92px;top:1189px;width:23px;text-align:center;font-size:11px;color:#333">Tab</div>
<div class="t" style="left:119.0px;top:1190.8px;font-size:12px;color:#333;letter-spacing:0.6px;font-weight:normal;font-style:normal;">or</div>
<div class="a" style="left:133px;top:1186px;width:18px;height:19px;background:#fafafa;border:1px solid #a8a8a8;border-radius:3px"></div>
<div class="t" style="left:133px;top:1189px;width:18px;text-align:center;font-size:11px;color:#333">&#8593;</div>
<div class="a" style="left:152px;top:1186px;width:17px;height:19px;background:#fafafa;border:1px solid #a8a8a8;border-radius:3px"></div>
<div class="t" style="left:152px;top:1189px;width:17px;text-align:center;font-size:11px;color:#333">&#8595;</div>
<div class="t" style="left:173.0px;top:1190.8px;font-size:12px;color:#333;letter-spacing:0px;font-weight:normal;font-style:normal;transform:scaleX(0.9931);transform-origin:0 0;">to navigate</div>
<div class="a" style="left:249px;top:1186px;width:17px;height:19px;background:#fafafa;border:1px solid #a8a8a8;border-radius:3px"></div>
<div class="t" style="left:249px;top:1189px;width:17px;text-align:center;font-size:11px;color:#333">&#8626;</div>
<div class="t" style="left:270.0px;top:1190.8px;font-size:12px;color:#333;letter-spacing:0px;font-weight:normal;font-style:normal;transform:scaleX(0.9742);transform-origin:0 0;">to open</div>
<svg style="left:390px;top:1187px" width="21" height="17" viewBox="0 0 21 17"><rect x="1" y="1" width="19" height="15" fill="#fff" stroke="#222" stroke-width="1.6"/><path d="M5,13 L10,13 L10,8 L15,8 L15,4" fill="none" stroke="#222" stroke-width="2"/></svg>
<svg style="left:418px;top:1188px" width="16" height="16" viewBox="0 0 16 16"><circle cx="8" cy="8" r="7.5" fill="#8a8a8a"/><text x="8" y="12.5" font-family="Liberation Sans" font-weight="bold" font-size="12" fill="#fff" text-anchor="middle">?</text></svg>
<div class="a" style="left:443px;top:1178px;width:1154px;height:30px;background:#fff;"></div>
<div class="a" style="left:444px;top:1178px;width:42px;height:30px;background:#dadada;"></div>
<svg style="left:452px;top:1186px" width="18" height="17" viewBox="0 0 18 17"><path d="M9,1 L9,16 M1.5,8.5 L16.5,8.5" stroke="#444" stroke-width="2.6"/></svg>
<div class="a" style="left:486px;top:1178px;width:219px;height:29px;background:#e8e8e8;border-radius:0 0 6px 6px;border-right:2px solid #d8d8d8"></div>
<svg style="left:499px;top:1182px" width="20" height="21" viewBox="0 0 20 21"><path d="M2,6 L5,4 L8,5 L8,18 L5,19.5 L2,18 Z" fill="#fff" stroke="#222" stroke-width="1.2"/><path d="M8,4 L10,1.5 L15,1 L17,3 L17,18 L14,19.5 L10,19 L8,18" fill="#fff" stroke="#222" stroke-width="1.2"/><path d="M10,3 L10,19 M14,3 L14,19.5 M2,6 L8,7" fill="none" stroke="#222" stroke-width="1"/></svg>
<div class="t" style="left:522.0px;top:1185.5px;font-size:16px;color:#333;letter-spacing:0px;font-weight:normal;font-style:normal;transform:scaleX(0.9363);transform-origin:0 0;">Final Version</div>
<div class="a" style="left:707px;top:1178px;width:219px;height:29px;background:#e8e8e8;border-radius:0 0 6px 6px;border-right:2px solid #d8d8d8"></div>
<svg style="left:719px;top:1182px" width="21" height="21" viewBox="0 0 21 21"><path d="M2,4 L5,1.5 L16,1.5 L19,4 L19,18 L16,20 L5,20 L2,18 Z" fill="#fff" stroke="#222" stroke-width="1.2"/><path d="M5,5 L15,5 L15,16 L5,16 Z" fill="#888" stroke="#222" stroke-width="1"/><path d="M2,4 L5,5 M15,5 L19,4 M5,16 L2,18 M15,16 L16,20" stroke="#222" stroke-width="0.9"/></svg>
<div class="t" style="left:743.0px;top:1185.5px;font-size:16px;color:#333;letter-spacing:0px;font-weight:normal;font-style:normal;transform:scaleX(0.9352);transform-origin:0 0;">Donut Hole-der Assem...</div>
<div class="a" style="left:928px;top:1178px;width:220px;height:29px;background:#e8e8e8;border-radius:0 0 6px 6px;border-right:2px solid #d8d8d8"></div>
<svg style="left:940px;top:1184px" width="21" height="19" viewBox="0 0 21 19"><path d="M1.5,2.5 L7.5,2.5 L9.5,5 L18.5,5 L18.5,16.5 L1.5,16.5 Z" fill="#fff" stroke="#333" stroke-width="1.3"/></svg>
<div class="t" style="left:964.0px;top:1185.5px;font-size:16px;color:#333;letter-spacing:0px;font-weight:normal;font-style:normal;transform:scaleX(0.9615);transform-origin:0 0;">Patenting</div>
<svg style="left:1160px;top:1184px" width="21" height="19" viewBox="0 0 21 19"><path d="M1.5,2.5 L7.5,2.5 L9.5,5 L18.5,5 L18.5,16.5 L1.5,16.5 Z" fill="#fff" stroke="#333" stroke-width="1.3"/></svg>
<div class="t" style="left:1184.0px;top:1185.5px;font-size:16px;color:#333;letter-spacing:0px;font-weight:normal;font-style:normal;transform:scaleX(0.8945);transform-origin:0 0;">DFM</div>
<div class="a" style="left:1369px;top:1178px;width:220px;height:29px;background:#e8e8e8;border-radius:0 0 6px 6px;border-right:2px solid #d8d8d8"></div>
<svg style="left:1381px;top:1184px" width="21" height="19" viewBox="0 0 21 19"><path d="M1.5,2.5 L7.5,2.5 L9.5,5 L18.5,5 L18.5,16.5 L1.5,16.5 Z" fill="#fff" stroke="#333" stroke-width="1.3"/></svg>
<div class="t" style="left:1405.0px;top:1185.5px;font-size:16px;color:#333;letter-spacing:0px;font-weight:normal;font-style:normal;transform:scaleX(0.9148);transform-origin:0 0;">Render</div>
<div class="a" style="left:1152px;top:1206px;width:214px;height:2px;background:#1d3f8f;"></div>
<div class="a" style="left:1590px;top:1178px;width:7px;height:30px;background:#d9d9d9;"></div>
<div class="a" style="left:443px;top:603px;width:34px;height:37px;background:#fff;border:1px solid #aaa;border-left:1px solid #bbb"></div>
<svg style="left:448px;top:609px" width="24" height="24" viewBox="0 0 24 24"><path d="M4,5 L7.5,8.5 L11,5 M7.5,8.5 L7.5,21" fill="none" stroke="#222" stroke-width="1.5"/><path d="M11,7.5 L21,7.5 M9,12.5 L21,12.5 M9,17 L21,17 M9,21 L21,21" stroke="#444" stroke-width="1.8"/></svg>
<svg style="left:1412px;top:92px" width="176" height="176" viewBox="0 0 176 176"><g fill="#dde3ea"><path d="M87,7 L94,16 L80,16 Z"/><path d="M87,170 L95,160 L79,160 Z"/><path d="M6,89 L16,81 L16,97 Z"/><path d="M169,89 L159,81 L159,97 Z"/></g><g fill="none" stroke="#e0e5ec" stroke-width="6"><path d="M34,38 C42,28 52,22 62,19"/><path d="M112,19 C122,22 132,28 140,38"/></g><path d="M25,34 L30,47 L41,40 Z M133,40 L144,47 L149,34 Z" fill="#e0e5ec"/><path d="M86.8,45 L126.6,62 L126.6,112.6 L86.8,133 L45.7,112.6 L43.3,68 Z" fill="#e2e7ee" stroke="#e2e7ee" stroke-width="8" stroke-linejoin="round"/><g fill="#fff" stroke="#fff" stroke-width="5" stroke-linejoin="round"><path d="M86.8,54 L116,65 L88,78 L57,66 Z"/><path d="M51,74 L81,89 L81,124 L51,108 Z"/><path d="M93,89 L121,74 L121,108 L93,124 Z"/></g><ellipse cx="86.8" cy="127" rx="7" ry="3.5" fill="#fff"/><g font-family="Liberation Sans" font-size="10.5" font-weight="bold" fill="#333"><text x="74" y="62" transform="rotate(200 87 60)">Front</text><text x="54" y="101" transform="rotate(-150 62 98)">Top</text><text x="100" y="102" transform="rotate(-78 110 98)">Left</text></g><path d="M90.4,39 L133.2,57.7" stroke="#d42a2a" stroke-width="1.4"/><path d="M133.2,57.7 L86,78.2" stroke="#2a2ad0" stroke-width="1.5"/><path d="M133.2,57.7 L135,116" stroke="#3a9a3a" stroke-width="1.4"/><g font-family="Liberation Sans" font-size="13" font-weight="bold"><text x="77" y="41" fill="#d42222">X</text><text x="74" y="87" fill="#2222c8">Z</text><text x="129" y="131" fill="#2a9a2a">Y</text></g></svg>
<svg style="left:1539px;top:243px" width="21" height="21" viewBox="0 0 21 21"><path d="M2,5 L10,1.5 L19,5 L19,15 L10,19.5 L2,15 Z" fill="#ccc" stroke="#333" stroke-width="1.3"/><path d="M2,5 L10,8.5 L19,5 M10,8.5 L10,19.5" fill="none" stroke="#333" stroke-width="1.1"/><path d="M2,5 L10,8.5 L10,19.5 L2,15 Z" fill="#aaa"/></svg>
<svg style="left:1569px;top:250px" width="8" height="5" viewBox="0 0 8 5"><path d="M0.5,0.5 L7,0.5 L3.75,4 Z" fill="#333"/></svg>
<div class="a" style="left:1563px;top:525px;width:35px;height:37px;background:#fff;border:1px solid #aaa;border-right:none"></div>
<div class="a" style="left:1563px;top:561px;width:35px;height:37px;background:#fff;border:1px solid #aaa;border-right:none"></div>
<div class="a" style="left:1563px;top:597px;width:35px;height:37px;background:#fff;border:1px solid #aaa;border-right:none"></div>
<div class="a" style="left:1563px;top:633px;width:35px;height:37px;background:#fff;border:1px solid #aaa;border-right:none"></div>
<div class="a" style="left:1563px;top:681px;width:35px;height:37px;background:#fff;border:1px solid #aaa;border-right:none"></div>
<svg style="left:1568px;top:530px" width="26" height="26" viewBox="0 0 26 26"><path d="M4,20 L14,4 L22,12 L22,22 L6,22 Z" fill="#8a8a8a"/><path d="M14,4 L18,6 L22,12" fill="none" stroke="#555" stroke-width="1.5"/><rect x="3" y="15" width="20" height="8" rx="4" fill="#fff" stroke="#333" stroke-width="1.2"/><circle cx="7" cy="19" r="1.5" fill="#333"/></svg>
<svg style="left:1568px;top:566px" width="26" height="26" viewBox="0 0 26 26"><path d="M9,10 L16,7 L23,10 L23,19 L16,22.5 L9,19 Z M9,10 L16,13 L23,10 M16,13 L16,22.5" fill="#fff" stroke="#222" stroke-width="1.3"/><rect x="3" y="3" width="10" height="8" fill="#2a6ad8" stroke="#1a3a8a" stroke-width="0.8"/><path d="M8,3 L8,11 M3,7 L13,7" stroke="#bcd" stroke-width="0.8"/></svg>
<svg style="left:1568px;top:602px" width="26" height="26" viewBox="0 0 26 26"><rect x="4" y="3" width="8" height="9" fill="#555"/><path d="M8,3 L8,12 M4,7.5 L12,7.5" stroke="#ccc" stroke-width="0.8"/><path d="M7,11 L15,8 L22,11 L22,18 L15,21 L7,18 Z" fill="#fff" stroke="#222" stroke-width="1.3"/><path d="M5,10 C3,14 3,18 5,22 M24,10 C26,14 26,18 24,22" fill="none" stroke="#222" stroke-width="1.2"/></svg>
<svg style="left:1568px;top:638px" width="26" height="26" viewBox="0 0 26 26"><rect x="4" y="3" width="9" height="9" fill="#444"/><path d="M8.5,3 L8.5,12 M4,7.5 L13,7.5" stroke="#ccc" stroke-width="0.8"/><path d="M6,12 C3,15 3,20 6,23 M22,12 C25,15 25,20 22,23" fill="none" stroke="#222" stroke-width="2"/><path d="M10,14 L18,21 M18,14 L10,21" stroke="#222" stroke-width="2.2"/></svg>
<svg style="left:1568px;top:686px" width="26" height="26" viewBox="0 0 26 26"><rect x="1" y="1" width="24" height="24" rx="3" fill="#d4d4d4"/><path d="M5,4 L21,22 M21,4 L5,22" stroke="#1535c8" stroke-width="5" stroke-linecap="round"/><path d="M5,4 L21,22 M21,4 L5,22" stroke="#4a7af8" stroke-width="1.5" stroke-linecap="round"/></svg>
<svg style="left:1489px;top:1153px" width="20" height="19" viewBox="0 0 20 19"><path d="M1,16 L1,12 L11,12 L11,8 C11,4 19,4 19,8 L19,16 Z" fill="#fff" stroke="#222" stroke-width="1.5"/><circle cx="13" cy="8" r="2" fill="none" stroke="#222" stroke-width="1.2"/><circle cx="17" cy="8" r="2" fill="none" stroke="#222" stroke-width="1.2"/><path d="M3,16 L3,14 M6,16 L6,14 M9,16 L9,14" stroke="#222"/></svg>
<svg style="left:1525px;top:1153px" width="24" height="18" viewBox="0 0 24 18"><path d="M2,16 C2,6 8,2 12,2 C16,2 22,6 22,16 Z" fill="none" stroke="#222" stroke-width="1.8"/><path d="M7,15 C7,10 9,8 12,8 C15,8 17,10 17,15" fill="none" stroke="#222" stroke-width="1.4"/><path d="M1,16.5 L23,16.5" stroke="#222" stroke-width="1.8"/></svg>
<svg style="left:1567px;top:1152px" width="18" height="19" viewBox="0 0 18 19"><path d="M9,1 L9,16 M2,4 L16,4 M1,17.5 L17,17.5" stroke="#222" stroke-width="1.8"/><path d="M2,4 L0.5,11 L4.5,11 Z M16,4 L13.5,11 L17.5,11 Z" fill="none" stroke="#222" stroke-width="1.2"/></svg>
<svg width="1600" height="1243" style="left:0;top:0"><defs>
<linearGradient id="gP" gradientUnits="userSpaceOnUse" x1="760" y1="517" x2="842" y2="702"><stop offset="0" stop-color="#9246a6"/><stop offset="0.3" stop-color="#a04eb4"/><stop offset="0.7" stop-color="#ae58c0"/><stop offset="1" stop-color="#bc66cc"/></linearGradient>
<radialGradient id="gPh" cx="0.5" cy="0.5" r="0.5"><stop offset="0" stop-color="#fbb0ff" stop-opacity="1"/><stop offset="0.35" stop-color="#ec98f6" stop-opacity="0.8"/><stop offset="0.7" stop-color="#d07ee0" stop-opacity="0.35"/><stop offset="1" stop-color="#c070d0" stop-opacity="0"/></radialGradient>
<linearGradient id="gY" gradientUnits="userSpaceOnUse" x1="1250" y1="480" x2="1313" y2="620"><stop offset="0" stop-color="#eeac12"/><stop offset="0.3" stop-color="#e6a20e"/><stop offset="0.6" stop-color="#d4960c"/><stop offset="0.85" stop-color="#c08a0e"/><stop offset="1" stop-color="#c48c0e"/></linearGradient>
<linearGradient id="gG" gradientUnits="userSpaceOnUse" x1="784" y1="518" x2="874" y2="723"><stop offset="0" stop-color="#3a7026"/><stop offset="0.22" stop-color="#4a8a32"/><stop offset="0.42" stop-color="#8cc866"/><stop offset="0.56" stop-color="#e8f7cc"/><stop offset="0.66" stop-color="#d0efac"/><stop offset="0.82" stop-color="#8ccc62"/><stop offset="1" stop-color="#5c9e40"/></linearGradient>
<clipPath id="cInner"><path d="M881.1,784.3 L887.8,780.8 L894.1,776.3 L899.8,770.9 L904.9,764.6 L909.4,757.5 L913.3,749.6 L916.5,741.0 L918.9,731.7 L920.7,721.9 L921.8,711.6 L922.0,700.8 L921.6,689.7 L920.4,678.4 L918.5,666.9 L915.9,655.3 L912.5,643.7 L908.5,632.2 L903.9,620.9 L898.6,609.8 L892.8,599.1 L886.5,588.8 L879.7,579.1 L872.5,569.9 L864.9,561.4 L857.0,553.6 L848.8,546.6 L840.5,540.4 L832.0,535.1 L823.5,530.7 L815.0,527.3 L806.6,524.8 L798.3,523.4 L790.2,522.9 L782.3,523.5 L774.8,525.1 L767.7,527.7 L761.0,531.2 L754.7,535.7 L749.0,541.1 L743.9,547.4 L739.4,554.5 L735.5,562.4 L732.3,571.0 L729.9,580.3 L728.1,590.1 L727.0,600.4 L726.8,611.2 L727.2,622.3 L728.4,633.6 L730.3,645.1 L732.9,656.7 L736.3,668.3 L740.3,679.8 L744.9,691.1 L750.2,702.2 L756.0,712.9 L762.3,723.2 L769.1,732.9 L776.3,742.1 L783.9,750.6 L791.8,758.4 L800.0,765.4 L808.3,771.6 L816.8,776.9 L825.3,781.3 L833.8,784.7 L842.2,787.2 L850.5,788.6 L858.6,789.1 L866.5,788.5 L874.0,786.9 L881.1,784.3Z"/></clipPath>
<clipPath id="cOutInner"><path clip-rule="evenodd" d="M600,600 L1000,600 L1000,900 L600,900 Z M881.1,784.3 L887.8,780.8 L894.1,776.3 L899.8,770.9 L904.9,764.6 L909.4,757.5 L913.3,749.6 L916.5,741.0 L918.9,731.7 L920.7,721.9 L921.8,711.6 L922.0,700.8 L921.6,689.7 L920.4,678.4 L918.5,666.9 L915.9,655.3 L912.5,643.7 L908.5,632.2 L903.9,620.9 L898.6,609.8 L892.8,599.1 L886.5,588.8 L879.7,579.1 L872.5,569.9 L864.9,561.4 L857.0,553.6 L848.8,546.6 L840.5,540.4 L832.0,535.1 L823.5,530.7 L815.0,527.3 L806.6,524.8 L798.3,523.4 L790.2,522.9 L782.3,523.5 L774.8,525.1 L767.7,527.7 L761.0,531.2 L754.7,535.7 L749.0,541.1 L743.9,547.4 L739.4,554.5 L735.5,562.4 L732.3,571.0 L729.9,580.3 L728.1,590.1 L727.0,600.4 L726.8,611.2 L727.2,622.3 L728.4,633.6 L730.3,645.1 L732.9,656.7 L736.3,668.3 L740.3,679.8 L744.9,691.1 L750.2,702.2 L756.0,712.9 L762.3,723.2 L769.1,732.9 L776.3,742.1 L783.9,750.6 L791.8,758.4 L800.0,765.4 L808.3,771.6 L816.8,776.9 L825.3,781.3 L833.8,784.7 L842.2,787.2 L850.5,788.6 L858.6,789.1 L866.5,788.5 L874.0,786.9 L881.1,784.3Z"/></clipPath>
<clipPath id="cSlot"><path d="M985,650 L1306,510.5 C1316,506 1326,510 1328,522 C1329,534 1320,545 1306,552.5 L981,697 C974,699 970,694 970,686 C969,676 970,665 975,659 C978,655 981,652 985,650 Z"/></clipPath>
</defs>
<path d="M812.0,830.0 L846.0,823.0 L872.0,815.0 L910.0,799.5 L960.0,776.0 L1000.0,756.0 L1040.0,737.0 L1120.0,703.0 L1290.0,628.0 C1302,622 1311,612 1314,596 L1313,592.9 L876,778.1 L812,802 Z" fill="#dc9c0c" stroke="#1d1208" stroke-width="1.2" stroke-linejoin="round"/>
<path d="M762.0,516.3 L1186.9,328.1 L1190.5,326.7 L1194.2,325.5 L1198.0,324.6 L1201.8,323.8 L1205.8,323.2 L1209.8,322.9 L1213.9,322.7 L1218.1,322.8 L1222.3,323.1 L1226.5,323.6 L1230.9,324.3 L1235.2,325.2 L1239.6,326.3 L1244.0,327.7 L1248.4,329.2 L1252.8,330.9 L1257.3,332.9 L1261.7,335.0 L1266.1,337.4 L1270.5,339.9 L1274.9,342.6 L1279.3,345.5 L1283.6,348.5 L1287.8,351.8 L1292.1,355.2 L1296.2,358.8 L1300.3,362.5 L1304.3,366.4 L1308.3,370.4 L1312.2,374.6 L1315.9,378.9 L1319.6,383.3 L1323.2,387.8 L1326.7,392.5 L1330.0,397.3 L1333.3,402.1 L1336.4,407.1 L1339.4,412.1 L1342.3,417.2 L1345.1,422.4 L1347.7,427.6 L1350.1,432.9 L1352.4,438.2 L1354.6,443.6 L1356.6,448.9 L1358.4,454.3 L1360.1,459.7 L1361.7,465.2 L1363.0,470.6 L1364.2,476.0 L1365.2,481.3 L1366.1,486.7 L1366.8,491.9 L1367.3,497.2 L1367.6,502.4 L1367.8,507.5 L1367.8,512.5 L1367.6,517.5 L1367.2,522.4 L1366.7,527.2 L1366.0,531.9 L1365.1,536.4 L1364.1,540.9 L1362.9,545.2 L1361.5,549.4 L1359.9,553.5 L1358.2,557.4 L1356.4,561.1 L1354.3,564.8 L1352.2,568.2 L1349.8,571.5 L1347.4,574.6 L1344.7,577.5 L1342.0,580.3 L1339.1,582.9 L1336.1,585.2 L1332.9,587.4 L1329.7,589.4 L1326.3,591.2 L1322.8,592.8 L876,786.1 L886.0,781.9 L893.4,776.8 L900.2,770.4 L906.1,762.9 L911.1,754.2 L915.3,744.5 L918.5,733.8 L920.6,722.4 L921.8,710.2 L922.0,697.5 L921.1,684.3 L919.2,670.9 L916.4,657.2 L912.5,643.6 L907.7,630.1 L902.1,616.9 L895.6,604.0 L888.4,591.8 L880.5,580.2 L872.0,569.4 L863.0,559.5 L853.6,550.6 L843.9,542.8 L834.0,536.3 L824.0,530.9 L814.0,526.9 L804.1,524.3 L794.4,523.1 L785.1,523.2 L776.1,524.7 L767.7,527.7 Z" fill="url(#gY)" stroke="#1d1208" stroke-width="1.2" stroke-linejoin="round"/>
<path d="M762.0,516.3 L1186.9,328.1 L1189.8,327.0 L1192.8,326.0 L1195.8,325.1 L1198.9,324.4 L1202.0,323.8 L1205.2,323.3 L1208.4,323.0 L1211.7,322.8 L1215.1,322.7 L1218.4,322.8 L1221.8,323.0 L1225.3,323.4 L1228.8,323.9 L1232.3,324.6 L1235.8,325.3 L1239.3,326.3 L1242.9,327.3 L1246.5,328.5 L1250.1,329.8 L1253.6,331.3 L1257.2,332.9 L1260.8,334.6 L1264.4,336.4 L1268.0,338.4 L1271.5,340.5 L1275.1,342.7 L1278.6,345.0 L1282.1,347.5 L1285.6,350.0 L1289.0,352.7 L1292.4,355.5 L1295.8,358.4 L1299.1,361.4 L1302.4,364.5 L1305.6,367.6 L1308.8,370.9 L1311.9,374.3 L1315.0,377.8 L1318.0,381.3 L1320.9,384.9 L1323.8,388.6 L1326.6,392.4 L1329.4,396.2 L1332.0,400.1 L1334.6,404.1 L1337.1,408.1 L1339.5,412.2 L1341.8,416.3 L1344.1,420.5 L1346.3,424.7 L1348.3,429.0 L1350.3,433.3 L1352.2,437.6 L1353.9,441.9 L1355.6,446.2 L1357.2,450.6 L1358.6,455.0 L1360.0,459.3 L1361.3,463.7 L1362.4,468.1 L921.4,661 L922.0,703.0 L921.8,693.8 L921.1,684.3 L919.9,674.7 L918.1,665.0 L915.9,655.3 L913.1,645.5 L909.9,635.8 L906.2,626.3 L902.1,616.9 L897.5,607.6 L892.6,598.7 L887.3,590.1 L881.6,581.8 L875.7,573.9 L869.5,566.4 L863.0,559.5 L856.3,553.0 L849.5,547.1 L842.5,541.8 L835.4,537.1 L828.3,533.1 L821.1,529.7 L814.0,526.9 L806.9,524.9 L799.9,523.6 L793.1,523.0 L786.4,523.1 L779.9,523.9 L773.7,525.4 L767.7,527.7 Z" fill="url(#gP)" stroke="#1d1208" stroke-width="1.2" stroke-linejoin="round"/>
<clipPath id="cP"><path d="M762.0,516.3 L1186.9,328.1 L1189.8,327.0 L1192.8,326.0 L1195.8,325.1 L1198.9,324.4 L1202.0,323.8 L1205.2,323.3 L1208.4,323.0 L1211.7,322.8 L1215.1,322.7 L1218.4,322.8 L1221.8,323.0 L1225.3,323.4 L1228.8,323.9 L1232.3,324.6 L1235.8,325.3 L1239.3,326.3 L1242.9,327.3 L1246.5,328.5 L1250.1,329.8 L1253.6,331.3 L1257.2,332.9 L1260.8,334.6 L1264.4,336.4 L1268.0,338.4 L1271.5,340.5 L1275.1,342.7 L1278.6,345.0 L1282.1,347.5 L1285.6,350.0 L1289.0,352.7 L1292.4,355.5 L1295.8,358.4 L1299.1,361.4 L1302.4,364.5 L1305.6,367.6 L1308.8,370.9 L1311.9,374.3 L1315.0,377.8 L1318.0,381.3 L1320.9,384.9 L1323.8,388.6 L1326.6,392.4 L1329.4,396.2 L1332.0,400.1 L1334.6,404.1 L1337.1,408.1 L1339.5,412.2 L1341.8,416.3 L1344.1,420.5 L1346.3,424.7 L1348.3,429.0 L1350.3,433.3 L1352.2,437.6 L1353.9,441.9 L1355.6,446.2 L1357.2,450.6 L1358.6,455.0 L1360.0,459.3 L1361.3,463.7 L1362.4,468.1 L921.4,661 L922.0,703.0 L921.8,693.8 L921.1,684.3 L919.9,674.7 L918.1,665.0 L915.9,655.3 L913.1,645.5 L909.9,635.8 L906.2,626.3 L902.1,616.9 L897.5,607.6 L892.6,598.7 L887.3,590.1 L881.6,581.8 L875.7,573.9 L869.5,566.4 L863.0,559.5 L856.3,553.0 L849.5,547.1 L842.5,541.8 L835.4,537.1 L828.3,533.1 L821.1,529.7 L814.0,526.9 L806.9,524.9 L799.9,523.6 L793.1,523.0 L786.4,523.1 L779.9,523.9 L773.7,525.4 L767.7,527.7 Z"/></clipPath>
<g clip-path="url(#cP)"><ellipse cx="1060" cy="545" rx="300" ry="75" transform="rotate(-23.8 1060 545)" fill="url(#gPh)" opacity="0.45"/><ellipse cx="950" cy="612" rx="230" ry="68" transform="rotate(-23.8 950 612)" fill="url(#gPh)"/></g>
<path d="M814,524.4 L1251,331.9" stroke="#2a1030" stroke-width="1.2"/>
<path d="M985,650 L1306,510.5 C1316,506 1326,510 1328,522 C1329,534 1320,545 1306,552.5 L981,697 C974,699 970,694 970,686 C969,676 970,665 975,659 C978,655 981,652 985,650 Z" fill="#4f9436" stroke="#1d1208" stroke-width="1.2" stroke-linejoin="round"/>
<g clip-path="url(#cSlot)">
<path d="M1218,540 C1224,552 1222,566 1216,578 C1212,585 1208,588 1203,590 L1100,640 L1110,700 L1400,700 L1400,480 Z" fill="#fff"/>
<path d="M1218,540 C1224,552 1222,566 1216,578 C1212,585 1208,588 1203,590" fill="none" stroke="#1d2a10" stroke-width="1"/>
<path d="M971,677 L1101.6,623.9" stroke="#1d2a10" stroke-width="1"/>
<path d="M1098.4,623.9 L1216,574.5 C1213,581 1209,585 1205,587 L1103,632 Z" fill="#5081c2" stroke="#1d2a40" stroke-width="0.9"/>
<path d="M1103,632 L1205,587 L1250,600 L1110,660 Z" fill="#fff"/>
<path d="M990.6,670.6 L1059.8,641.6 L1064,648 L996,676 Z" fill="#5081c2" stroke="#1d2a40" stroke-width="0.9"/>
<path d="M996,676 L1064,648 L1072,652 L1002,690 Z" fill="#fff"/>
<path d="M1058,641 L1072,635 L1084,646 L1066,653 Z" fill="#4674b4" stroke="#1d2a40" stroke-width="0.8"/>
<ellipse cx="1107" cy="611" rx="5" ry="6.5" fill="#b8860e" stroke="#1d1208" stroke-width="1"/>
<ellipse cx="1105.5" cy="611" rx="2.8" ry="4.5" fill="#fff"/>
</g>
<path d="M985,650 L1306,510.5 C1316,506 1326,510 1328,522 C1329,534 1320,545 1306,552.5 L981,697 C974,699 970,694 970,686 C969,676 970,665 975,659 C978,655 981,652 985,650 Z" fill="none" stroke="#1d1208" stroke-width="1.2" stroke-linejoin="round"/>
<path d="M981,697 L1306,552.5 C1313,549 1318,546 1320,543 L1316,541 C1312,544 1308,546 1303,548 L979,692 Z" fill="#f2b424" stroke="#1d1208" stroke-width="0.8"/>
<path d="M1306,510.5 C1316,506 1326,510 1328,522 C1329,534 1320,545 1306,552.5 L1303,548 C1314,542 1321,534 1320,525 C1319,515 1313,512 1308,513 Z" fill="#f0b020" stroke="#1d1208" stroke-width="0.8"/>
<ellipse cx="1203" cy="653" rx="5.5" ry="7" fill="#c8900e" stroke="#1d1208" stroke-width="1.1"/>
<path d="M1199,656 C1198,650 1201,647 1205,647 C1203,650 1202,654 1199,656 Z" fill="#f8e0a0"/>
<path d="M876,786.1 L1313,596.9" stroke="#1d1208" stroke-width="1.3"/>
<path d="M870.2,783.7 L877.3,780.0 L883.9,775.3 L890.0,769.6 L895.5,763.1 L900.3,755.7 L904.5,747.5 L908.0,738.6 L910.7,729.0 L912.7,718.8 L913.9,708.2 L914.3,697.1 L914.0,685.6 L912.9,674.0 L911.0,662.1 L908.4,650.2 L905.0,638.2 L900.9,626.4 L896.2,614.8 L890.8,603.5 L884.8,592.5 L878.2,582.0 L871.2,572.0 L863.7,562.6 L855.8,553.9 L847.5,546.0 L839.0,538.8 L830.3,532.6 L821.5,527.2 L812.6,522.8 L803.7,519.3 L794.8,516.9 L786.1,515.5 L777.5,515.1 L769.3,515.8 L761.3,517.5 L753.8,520.3 L746.7,524.0 L740.1,528.7 L734.0,534.4 L728.5,540.9 L723.7,548.3 L719.5,556.5 L716.0,565.4 L713.3,575.0 L711.3,585.2 L710.1,595.8 L709.7,606.9 L710.0,618.4 L711.1,630.0 L713.0,641.9 L715.6,653.8 L719.0,665.8 L723.1,677.6 L727.8,689.2 L733.2,700.5 L739.2,711.5 L745.8,722.0 L752.8,732.0 L760.3,741.4 L768.2,750.1 L776.5,758.0 L785.0,765.2 L793.7,771.4 L802.5,776.8 L811.4,781.2 L820.3,784.7 L829.2,787.1 L837.9,788.5 L846.5,788.9 L854.7,788.2 L862.7,786.5 L870.2,783.7Z" fill="#d06a52" stroke="#1d1208" stroke-width="1.2" stroke-linejoin="round"/>
<path d="M875.0,784.0 L881.8,780.4 L888.1,775.8 L893.9,770.4 L899.1,764.0 L903.7,756.9 L907.6,748.9 L910.9,740.2 L913.4,730.9 L915.2,721.0 L916.3,710.6 L916.6,699.8 L916.2,688.7 L915.0,677.3 L913.1,665.7 L910.5,654.0 L907.2,642.4 L903.2,630.8 L898.5,619.4 L893.2,608.3 L887.4,597.6 L881.0,587.3 L874.1,577.5 L866.9,568.2 L859.2,559.7 L851.2,551.9 L843.0,544.8 L834.6,538.6 L826.1,533.3 L817.5,528.9 L808.9,525.5 L800.4,523.1 L792.0,521.6 L783.8,521.2 L775.8,521.8 L768.2,523.4 L761.0,526.0 L754.2,529.6 L747.9,534.2 L742.1,539.6 L736.9,546.0 L732.3,553.1 L728.4,561.1 L725.1,569.8 L722.6,579.1 L720.8,589.0 L719.7,599.4 L719.4,610.2 L719.8,621.3 L721.0,632.7 L722.9,644.3 L725.5,656.0 L728.8,667.6 L732.8,679.2 L737.5,690.6 L742.8,701.7 L748.6,712.4 L755.0,722.7 L761.9,732.5 L769.1,741.8 L776.8,750.3 L784.8,758.1 L793.0,765.2 L801.4,771.4 L809.9,776.7 L818.5,781.1 L827.1,784.5 L835.6,786.9 L844.0,788.4 L852.2,788.8 L860.2,788.2 L867.8,786.6 L875.0,784.0Z" fill="none" stroke="#3a1a10" stroke-width="1"/>
<path d="M881.1,784.3 L887.8,780.8 L894.1,776.3 L899.8,770.9 L904.9,764.6 L909.4,757.5 L913.3,749.6 L916.5,741.0 L918.9,731.7 L920.7,721.9 L921.8,711.6 L922.0,700.8 L921.6,689.7 L920.4,678.4 L918.5,666.9 L915.9,655.3 L912.5,643.7 L908.5,632.2 L903.9,620.9 L898.6,609.8 L892.8,599.1 L886.5,588.8 L879.7,579.1 L872.5,569.9 L864.9,561.4 L857.0,553.6 L848.8,546.6 L840.5,540.4 L832.0,535.1 L823.5,530.7 L815.0,527.3 L806.6,524.8 L798.3,523.4 L790.2,522.9 L782.3,523.5 L774.8,525.1 L767.7,527.7 L761.0,531.2 L754.7,535.7 L749.0,541.1 L743.9,547.4 L739.4,554.5 L735.5,562.4 L732.3,571.0 L729.9,580.3 L728.1,590.1 L727.0,600.4 L726.8,611.2 L727.2,622.3 L728.4,633.6 L730.3,645.1 L732.9,656.7 L736.3,668.3 L740.3,679.8 L744.9,691.1 L750.2,702.2 L756.0,712.9 L762.3,723.2 L769.1,732.9 L776.3,742.1 L783.9,750.6 L791.8,758.4 L800.0,765.4 L808.3,771.6 L816.8,776.9 L825.3,781.3 L833.8,784.7 L842.2,787.2 L850.5,788.6 L858.6,789.1 L866.5,788.5 L874.0,786.9 L881.1,784.3Z" fill="url(#gG)"/>
<g clip-path="url(#cInner)">
<path d="M776,566 L860,528 L900,520 L900,580 L860,564 L772,604 C762,606 756,594 760,582 C763,574 768,570 776,566 Z" fill="#fff" stroke="#1d1208" stroke-width="1.1"/>
<path d="M772,604 L862,564 L864,569 L776,608 Z" fill="#f0b020" stroke="#1d1208" stroke-width="0.8"/>
<path d="M700,752 L786.25,733.75 L960,660 L960,800 L700,800 Z" fill="#5a9a3c"/>
<path d="M700,790 L746.25,776.25 L960,684 L960,800 L700,800 Z" fill="#4f9636"/>
<path d="M786.25,733.75 L930,672 M746.25,776.25 L930,695" stroke="#1d2a10" stroke-width="1.1"/>
<path d="M777.5,792.5 L930,726 L930,737 L790,797 Z" fill="#5081c2" stroke="#1d2a40" stroke-width="0.8"/>
<path d="M790,797 L930,737 L930,748 L800,803 Z" fill="#fff"/>
<path d="M800,803 L930,748 L930,760 L810,808 Z" fill="#4f9636" stroke="#1d2a10" stroke-width="0.8"/>
</g>
<path d="M767.1,526.3 L771.6,524.5 L776.2,523.2 L781.0,522.2 L786.0,521.7 L791.0,521.5 L796.2,521.8 L801.4,522.4 L806.8,523.5 L812.1,525.0 L817.5,526.8 L823.0,529.1 L828.4,531.7 L833.8,534.7 L839.2,538.1 L844.5,541.9 L849.8,545.9 L855.0,550.4 L860.1,555.1 L865.1,560.1 L870.0,565.5 L874.8,571.1 L879.3,576.9 L883.8,583.0 L888.0,589.3 L892.1,595.8 L895.9,602.5 L899.6,609.4 L903.0,616.4 L906.1,623.5 L909.1,630.7 L911.7,638.0 L914.1,645.4 L916.3,652.8 L918.1,660.2 L919.7,667.6 L921.0,674.9 L921.9,682.2 L922.6,689.4 L923.0,696.5 L923.1,703.5" fill="none" stroke="#b85a44" stroke-width="2.6"/>
<path d="M755.9,534.7 L762.0,530.6 L768.6,527.3 L775.5,524.9 L782.7,523.5 L790.3,522.9 L798.1,523.4 L806.1,524.7 L814.2,527.0 L822.4,530.2 L830.6,534.3 L838.8,539.2 L846.8,545.0 L854.7,551.6 L862.4,558.8 L869.8,566.8 L876.9,575.4 L883.6,584.6 L889.9,594.3 L895.8,604.4 L901.1,614.9 L905.9,625.6 L910.2,636.6 L913.8,647.7 L916.8,658.9 L919.1,670.1 L920.8,681.1 L921.7,692.0 L922.0,702.6 L921.7,712.9 L920.6,722.8 L918.8,732.2 L916.4,741.1 L913.3,749.4 L909.6,757.0 L905.3,763.9 L900.5,770.1 L895.1,775.4 L889.2,779.9 L882.8,783.6 L876.0,786.3" fill="none" stroke="#2a1a10" stroke-width="1.1"/>
<path d="M766.5,524.9 L771.0,523.1 L775.7,521.8 L780.6,520.8 L785.6,520.2 L790.7,520.1 L795.9,520.3 L801.2,521.0 L806.6,522.1 L812.0,523.6 L817.5,525.5 L823.0,527.7 L828.5,530.4 L833.9,533.4 L839.4,536.9 L844.8,540.6 L850.1,544.8 L855.4,549.2 L860.6,554.0 L865.6,559.1 L870.6,564.5 L875.3,570.1 L880.0,576.0 L884.5,582.2 L888.8,588.6 L892.9,595.2 L896.7,601.9 L900.4,608.9 L903.9,616.0 L907.1,623.2 L910.0,630.5 L912.7,637.8 L915.1,645.3 L917.3,652.7 L919.2,660.2 L920.7,667.6 L922.0,675.1 L923.0,682.4 L923.7,689.7 L924.1,696.9 L924.2,704.0" fill="none" stroke="#2a1a10" stroke-width="0.9"/>
<path d="M755.9,534.7 L751.9,538.2 L748.1,542.1 L744.6,546.4 L741.4,551.1 L738.5,556.2 L735.9,561.6 L733.6,567.4 L731.6,573.5 L729.9,579.9 L728.6,586.5 L727.7,593.4 L727.0,600.5 L726.8,607.8 L726.8,615.3 L727.3,622.9 L728.0,630.7 L729.1,638.5 L730.6,646.4 L732.3,654.4 L734.5,662.3 L736.9,670.2 L739.6,678.1 L742.7,685.9 L746.0,693.5 L749.6,701.1 L753.5,708.5 L757.6,715.7 L762.0,722.7 L766.6,729.4 L771.4,735.9" fill="none" stroke="#2a1a10" stroke-width="1.2"/>
<path d="M727.5,770.0 L733.0,779.0 L740.6,786.0 L755.0,794.0 L768.0,799.0 L790.0,804.0 L812.5,801.8 L846.0,794.3 L872.5,784.5 L910.0,774.0 L925.0,768.0 L925.0,793.0 L910.0,799.5 L872.0,815.0 L846.0,823.0 L812.5,829.5 L790.0,828.8 L768.0,825.0 L755.0,819.0 L740.6,812.0 L733.0,805.0 L729.0,796.0 Z" fill="#dc9c0c"/>
<path d="M727.5,770.0 L733.0,779.0 L740.6,786.0 L755.0,794.0 L768.0,799.0 L790.0,804.0 L812.5,801.8 L812.5,829.5 L790.0,828.8 L768.0,825.0 L755.0,819.0 L740.6,812.0 L733.0,805.0 L729.0,796.0 Z" fill="#b55a46"/>
<path d="M727.5,770.0 L733.0,779.0 L740.6,786.0 L755.0,794.0 L768.0,799.0 L790.0,804.0 L812.5,801.8 L846.0,794.3 L872.5,784.5 L910.0,774.0" fill="none" stroke="#1d1208" stroke-width="1.2"/>
<path d="M910.0,799.5 L872.0,815.0 L846.0,823.0 L812.5,829.5 L790.0,828.8 L768.0,825.0 L755.0,819.0 L740.6,812.0 L733.0,805.0 L729.0,796.0 L727.5,770.0" fill="none" stroke="#1d1208" stroke-width="1.3"/>
<path d="M744,787.5 L744,814 M780,802 L780,827 M812.5,801.8 L812.5,829.5 M846,794.3 L846,823" stroke="#1d1208" stroke-width="1"/>
<path d="M777.0,735.0 L750.0,745.0 L736.0,753.0 L729.0,762.0 L727.5,770.0 L733.0,779.0 L740.6,786.0 L755.0,794.0 L768.0,799.0 L790.0,804.0 L812.5,801.8 L846.0,794.3 L872.5,784.5 L872.5,775.0 L835.0,792.0 L790.0,799.0 L757.0,786.0 L744.0,780.0 L741.0,770.0 L742.0,764.0 L749.0,756.0 L784.5,736.0 Z" fill="#df765e" stroke="#1d1208" stroke-width="1.1" stroke-linejoin="round"/>
<path d="M784.5,736.0 L749.0,756.0 L742.0,764.0 L741.0,770.0 L744.0,780.0 L757.0,786.0 L790.0,799.0 L835.0,792.0 L872.5,775.0 L918,742 L920,700 Z" fill="#4f9636" clip-path="url(#cOutInner)"/>
<path d="M784.5,736.0 L749.0,756.0 L742.0,764.0 L741.0,770.0 L744.0,780.0 L757.0,786.0 L790.0,799.0 L835.0,792.0 L872.5,775.0" fill="none" stroke="#1d1208" stroke-width="1.1"/>
<path d="M746.25,776.25 L922,699 M751,752.5 L751,772.5" stroke="#1d2a10" stroke-width="1.1"/>
<path d="M777.5,792.5 L919,730 L917,740 L790,797 Z" fill="#5081c2" stroke="#1d2a40" stroke-width="0.8"/>
<path d="M790,797 L917,740 L914,750 L805,790 L795,797 Z" fill="#fff"/>
<path d="M793,798 L805,791 L818,790 L830,784 L912,752 L905,762 L872.5,775 L835,792 Z" fill="#4f9636" stroke="#1d2a10" stroke-width="0.9"/>
<path d="M794,770 L833,755 C837,754 837,759 834,760 L795,775 C791,776 790,771 794,770 Z" fill="#5081c2" stroke="#1d2a40" stroke-width="0.9"/>
<path d="M802,781 L815,776 L822,778 L832,774 L834,783 L824,789 L814,785 L806,789 Z" fill="#4674b4" stroke="#1d2a40" stroke-width="0.8"/>
<ellipse cx="765" cy="760" rx="6" ry="7" fill="#b8860e" stroke="#1d1208" stroke-width="1"/>
<path d="M760,764 C759,758 761,755 764,754 C762,758 762,762 760,764 Z" fill="#fff"/>
<ellipse cx="859" cy="803" rx="7" ry="8.5" fill="#c99210" stroke="#1d1208" stroke-width="1.1"/>
<path d="M854,807 L859,802 L865,806 M859,802 L860,795" stroke="#1d1208" stroke-width="0.8" fill="none"/>
<path d="M872.5,774 L886,768 L890,776 L876,787 Z" fill="#a85840" stroke="#1d1208" stroke-width="0.9"/>
<path d="M905.0,620.4 L909.1,630.3 L912.7,640.3 L915.8,650.4 L918.4,660.5 L920.4,670.7 L922.0,680.7 L922.9,690.6 L923.3,700.3 L923.1,709.7 L922.4,718.9 L921.1,727.7 L919.3,736.0 L916.9,744.0 L914.0,751.4 L910.6,758.3 L906.7,764.6 L902.4,770.3 L897.6,775.3 L892.3,779.6 L886.7,783.3" fill="none" stroke="#c8644c" stroke-width="2.4"/>
<path d="M905.9,620.0 L910.0,630.0 L913.7,640.1 L916.8,650.3 L919.4,660.5 L921.5,670.8 L923.0,680.9 L924.0,690.9 L924.4,700.7 L924.2,710.2 L923.5,719.5 L922.2,728.3 L920.3,736.8 L917.9,744.8 L915.0,752.3 L911.5,759.3 L907.6,765.6 L903.2,771.4 L898.3,776.5 L893.0,780.9 L887.3,784.6" fill="none" stroke="#2a1a10" stroke-width="1"/>
</svg>
<svg width="1600" height="1243" style="left:0;top:0"><g fill="none" stroke="#e81c1c" stroke-width="7.5" stroke-linecap="round" stroke-linejoin="round"><path d="M134,1024 L86,1114"/><path d="M92,1066 C90,1080 87,1098 85,1114 C96,1114 108,1113 116,1113"/><path d="M34,1129 C50,1132 70,1141 82,1153 C92,1165 97,1182 97,1198 C96,1214 84,1226 66,1231 C50,1235 30,1231 19,1220 C9,1210 5,1195 6,1178 C7,1160 16,1147 30,1140 C38,1137 48,1137 56,1139"/></g></svg>
</body></html>
